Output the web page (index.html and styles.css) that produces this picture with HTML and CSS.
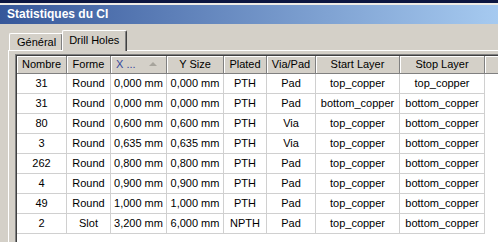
FILE: index.html
```html
<!DOCTYPE html>
<html lang="fr">
<head>
    <meta charset="UTF-8">
    <meta name="viewport" content="width=device-width, initial-scale=1.0">
    <title>Statistiques du CI</title>
    <link rel="stylesheet" href="styles.css">
</head>
<body>
    <div class="window">
        <div class="frame-top"></div>
        <div class="titlebar">Statistiques du CI</div>

        <div class="tabs">
            <div class="tab">Général</div>
            <div class="tab active">Drill Holes</div>
        </div>

        <div class="tab-panel">
            <div class="list-view">
                <table class="drill-table">
                    <colgroup>
                        <col class="c-nombre">
                        <col class="c-forme">
                        <col class="c-x">
                        <col class="c-y">
                        <col class="c-plated">
                        <col class="c-via">
                        <col class="c-start">
                        <col class="c-stop">
                        <col>
                    </colgroup>
                    <thead>
                        <tr>
                            <th>Nombre</th>
                            <th>Forme</th>
                            <th class="sorted">X ...<span class="sort-arrow"></span></th>
                            <th>Y Size</th>
                            <th>Plated</th>
                            <th>Via/Pad</th>
                            <th>Start Layer</th>
                            <th>Stop Layer</th>
                            <th class="filler"></th>
                        </tr>
                    </thead>
                    <tbody id="drill-rows"></tbody>
                </table>
            </div>
        </div>
    </div>
<script>
document.addEventListener('DOMContentLoaded', function () {
    const holes = [
        [31, 'Round', '0,000 mm', '0,000 mm', 'PTH', 'Pad', 'top_copper', 'top_copper'],
        [31, 'Round', '0,000 mm', '0,000 mm', 'PTH', 'Pad', 'bottom_copper', 'bottom_copper'],
        [80, 'Round', '0,600 mm', '0,600 mm', 'PTH', 'Via', 'top_copper', 'bottom_copper'],
        [3, 'Round', '0,635 mm', '0,635 mm', 'PTH', 'Via', 'top_copper', 'bottom_copper'],
        [262, 'Round', '0,800 mm', '0,800 mm', 'PTH', 'Pad', 'top_copper', 'bottom_copper'],
        [4, 'Round', '0,900 mm', '0,900 mm', 'PTH', 'Pad', 'top_copper', 'bottom_copper'],
        [49, 'Round', '1,000 mm', '1,000 mm', 'PTH', 'Pad', 'top_copper', 'bottom_copper'],
        [2, 'Slot', '3,200 mm', '6,000 mm', 'NPTH', 'Pad', 'top_copper', 'bottom_copper']
    ];

    const tbody = document.getElementById('drill-rows');

    holes.forEach((hole) => {
        const row = document.createElement('tr');
        hole.forEach((value) => {
            const cell = document.createElement('td');
            cell.textContent = value;
            row.appendChild(cell);
        });
        // empty cell under the header filler
        const spare = document.createElement('td');
        spare.className = 'filler';
        row.appendChild(spare);
        tbody.appendChild(row);
    });
});
</script>
</body>
</html>
```

FILE: styles.css
```css
/* General */
body {
    margin: 0;
    padding: 0;
    background-color: #d4d0c8;
    font-family: "Liberation Sans", Arial, sans-serif;
    font-size: 11px;
    color: #000;
    overflow: hidden;
}

.window {
    width: 498px;
    height: 242px;
    overflow: hidden;
}

/* Title bar */
.frame-top {
    height: 3px;
    background-color: #0c1640;
    border-bottom: 2px solid #eeece6;
}

.titlebar {
    height: 19px;
    line-height: 19px;
    padding-left: 7px;
    font-size: 12px;
    font-weight: bold;
    color: #fff;
    background: linear-gradient(to right, #36579a, #a6caf0);
}

/* Tabs */
.tabs {
    display: flex;
    align-items: flex-end;
    height: 26px;
    padding-left: 9px;
}

.tab {
    height: 16px;
    line-height: 16px;
    padding: 0 6px 0 7px;
    border-top: 1px solid #fff;
    border-left: 1px solid #fff;
    border-right: 1px solid #404040;
    box-shadow: inset -1px 0 #808080;
    border-radius: 2px 2px 0 0;
}

.tab.active {
    height: 20px;
    line-height: 19px;
    padding: 0 7px 0 6px;
    margin-bottom: -1px;
    margin-left: -1px;
    background-color: #d4d0c8;
    position: relative;
}

/* Tab page */
.tab-panel {
    margin-left: 8px;
    padding: 3px 0 0 6px;
    border-top: 1px solid #fff;
    border-left: 1px solid #fff;
    height: 200px;
}

.list-view {
    height: 100%;
    background-color: #fff;
    border-top: 1px solid #808080;
    border-left: 1px solid #808080;
    box-shadow: inset 1px 1px #404040;
    padding: 1px 0 0 1px;
}

/* Drill holes table */
.drill-table {
    border-collapse: separate;
    border-spacing: 0;
    table-layout: fixed;
    width: 481px;
}

.c-nombre { width: 50px; }
.c-forme { width: 44px; }
.c-x { width: 56px; }
.c-y { width: 57px; }
.c-plated { width: 43px; }
.c-via { width: 49px; }
.c-start { width: 84px; }
.c-stop { width: 85px; }

.drill-table th {
    height: 17px;
    line-height: 17px;
    padding: 0;
    font-weight: normal;
    text-align: center;
    white-space: nowrap;
    overflow: hidden;
    background-color: #d4d0c8;
    border-right: 1px solid #808080;
    border-bottom: 1px solid #808080;
    box-shadow: inset 1px 1px #fff;
}

.drill-table th.sorted {
    text-align: left;
    padding-left: 5px;
    color: #33479b;
}

.sort-arrow {
    display: inline-block;
    margin-left: 13px;
    vertical-align: 2px;
    border-left: 4px solid transparent;
    border-right: 4px solid transparent;
    border-bottom: 4px solid #a7a49c;
}

.drill-table th.filler {
    border-right: none;
}

.drill-table td {
    height: 19px;
    line-height: 19px;
    padding: 0;
    text-align: center;
    white-space: nowrap;
    overflow: hidden;
    border-right: 1px solid #d0d0d0;
    border-bottom: 1px solid #d0d0d0;
}

.drill-table td.filler {
    border: none;
}
```
